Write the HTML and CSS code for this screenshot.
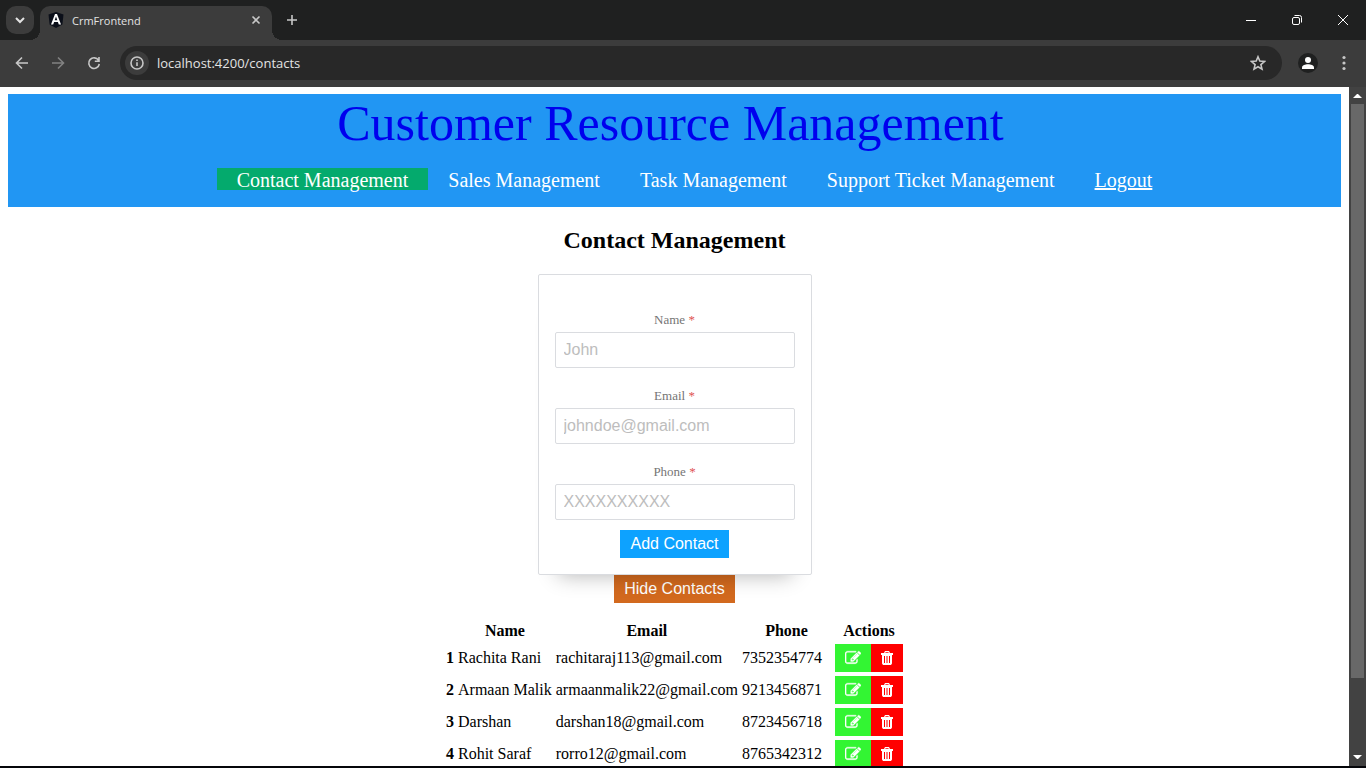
FILE: index.html
```html
<!DOCTYPE html>
<html lang="en">
<head>
<meta charset="utf-8">
<title>CrmFrontend</title>
<link rel="stylesheet" href="styles.css">
</head>
<body>
<svg class="defs" aria-hidden="true">
  <symbol id="edit" viewBox="0 0 1792 1792"><path d="M888 1184l116-116-152-152-116 116v56h96v96h56zm440-720q-16-16-33 1l-350 350q-17 17-1 33t33-1l350-350q17-17 1-33zm80 594v190q0 119-84.5 203.5t-203.5 84.5h-832q-119 0-203.5-84.5t-84.5-203.5v-832q0-119 84.5-203.5t203.5-84.5h832q63 0 117 25 15 7 18 23 3 17-9 29l-49 49q-14 14-32 8-23-6-45-6h-832q-66 0-113 47t-47 113v832q0 66 47 113t113 47h832q66 0 113-47t47-113v-126q0-13 9-22l64-64q15-15 35-7t20 29zm-96-738l288 288-672 672h-288v-288zm444 132l-92 92-288-288 92-92q28-28 68-28t68 28l152 152q28 28 28 68t-28 68z"/></symbol>
  <symbol id="trash" viewBox="0 0 12 14"><path fill-rule="evenodd" d="M4 0h4l1 2h3v2h-1v8.500L10 14H2l-1-1.500V4H0V2h3zM4.600 1.200L4.300 2h3.400l-.3-.8zM3 5v7h1V5zM5.500 5v7h1V5zM8 5v7h1V5z"/></symbol>
</svg>

<div class="tab-strip">
  <button class="tab-search" aria-label="Search tabs"><svg width="28" height="28" viewBox="0 0 28 28"><path class="line thick" d="M10 12l4 4 4-4"/></svg></button>
  <div class="tab">
    <svg width="16" height="16" viewBox="0 0 16 16"><path fill="#0b0f19" d="M8 0l7.500 2.500-1.100 10L8 16l-6.400-3.500L.5 2.500z"/><path fill="#fff" fill-rule="evenodd" d="M7 2h2l4 10.500h-2.200l-.9-2.500H6.100l-.9 2.500H3zM8 4.600L6.700 8.300h2.600z"/></svg>
    <span class="tab-title">CrmFrontend</span>
    <button class="plain" aria-label="Close tab"><svg width="16" height="16" viewBox="0 0 16 16"><path class="line" d="M4.500 4.500l7 7M11.500 4.500l-7 7"/></svg></button>
  </div>
  <button class="plain new-tab" aria-label="New tab"><svg width="16" height="16" viewBox="0 0 16 16"><path class="line" d="M8 3v10M3 8h10"/></svg></button>
  <div class="window-controls">
    <button class="plain" aria-label="Minimize"><svg width="46" height="40" viewBox="0 0 46 40"><path class="hair" d="M18 20.500h10"/></svg></button>
    <button class="plain" aria-label="Restore"><svg width="46" height="40" viewBox="0 0 46 40"><rect class="hair" x="18.500" y="17.500" width="7" height="7" rx="1.500"/><path class="hair" d="M20.500 15.500h5a2 2 0 0 1 2 2v5"/></svg></button>
    <button class="plain" aria-label="Close"><svg width="46" height="40" viewBox="0 0 46 40"><path class="hair" d="M18 15l10 10M28 15l-10 10"/></svg></button>
  </div>
</div>

<div class="toolbar">
  <button class="plain tool" aria-label="Back"><svg width="16" height="16" viewBox="0 0 16 16"><path class="line" d="M14 8H3M8 2.500L2.500 8 8 13.500"/></svg></button>
  <button class="plain tool disabled" aria-label="Forward" disabled><svg width="16" height="16" viewBox="0 0 16 16"><path class="line" d="M2 8h11M8 2.500L13.500 8 8 13.500"/></svg></button>
  <button class="plain tool" aria-label="Reload"><svg width="16" height="16" viewBox="0 0 16 16"><path class="line" d="M12.500 5.200A5.300 5.300 0 1 0 13.300 9M13 2v4.200H8.800"/></svg></button>
  <div class="address">
    <button class="site-info" aria-label="Site information"><svg width="16" height="16" viewBox="0 0 16 16"><circle class="line" cx="8" cy="8" r="6"/><path class="line" d="M8 7.300v3.700M8 4.500v1.400"/></svg></button>
    <input class="url" type="text" aria-label="Address" value="localhost:4200/contacts">
    <button class="plain" aria-label="Bookmark"><svg width="16" height="16" viewBox="0 0 16 16"><path class="line" d="M8 1.800l1.800 4.300 4.700.4-3.600 3.100 1.100 4.500L8 11.700l-4 2.400 1.100-4.500L1.500 6.500l4.700-.4z"/></svg></button>
  </div>
  <button class="plain profile" aria-label="Profile"><svg width="20" height="20" viewBox="0 0 20 20"><circle cx="10" cy="10" r="10" fill="#1f2020"/><circle cx="10" cy="7" r="3" fill="#fff"/><path fill="#fff" d="M4 16v-1.500c0-2.200 3.300-3.300 6-3.300s6 1.100 6 3.300V16z"/></svg></button>
  <button class="plain menu" aria-label="Menu"><svg width="16" height="16" viewBox="0 0 16 16"><g fill="#c7c7c7"><circle cx="8" cy="2.500" r="1.600"/><circle cx="8" cy="8" r="1.600"/><circle cx="8" cy="13.500" r="1.600"/></g></svg></button>
</div>

<div class="viewport">
  <div class="page">
    <header class="banner">
      <a class="brand" href="#">Customer Resource Management</a>
      <nav>
        <ul class="nav-list">
          <li><a class="nav-link active" href="#">Contact Management</a></li>
          <li><a class="nav-link" href="#">Sales Management</a></li>
          <li><a class="nav-link" href="#">Task Management</a></li>
          <li><a class="nav-link" href="#">Support Ticket Management</a></li>
          <li><a class="nav-link logout" href="#">Logout</a></li>
        </ul>
      </nav>
    </header>
    <main class="content">
      <h2 class="title">Contact Management</h2>
      <form class="card">
        <div class="field">
          <label for="name">Name <span class="required">*</span></label>
          <input id="name" type="text" placeholder="John">
        </div>
        <div class="field">
          <label for="email">Email <span class="required">*</span></label>
          <input id="email" type="email" placeholder="johndoe@gmail.com">
        </div>
        <div class="field">
          <label for="phone">Phone <span class="required">*</span></label>
          <input id="phone" type="tel" placeholder="XXXXXXXXXX">
        </div>
        <button class="btn add" type="submit">Add Contact</button>
      </form>
      <button class="btn hide" type="button">Hide Contacts</button>
      <table class="contacts">
        <thead>
          <tr><th></th><th>Name</th><th>Email</th><th class="phone">Phone</th><th>Actions</th></tr>
        </thead>
        <tbody>
          <tr><th>1</th><td>Rachita Rani</td><td>rachitaraj113@gmail.com</td><td>7352354774</td><td><div class="actions"><button class="btn edit" aria-label="Edit"><svg width="16" height="16"><use href="#edit"/></svg></button><button class="btn delete" aria-label="Delete"><svg width="12" height="14"><use href="#trash"/></svg></button></div></td></tr>
          <tr><th>2</th><td>Armaan Malik</td><td>armaanmalik22@gmail.com</td><td>9213456871</td><td><div class="actions"><button class="btn edit" aria-label="Edit"><svg width="16" height="16"><use href="#edit"/></svg></button><button class="btn delete" aria-label="Delete"><svg width="12" height="14"><use href="#trash"/></svg></button></div></td></tr>
          <tr><th>3</th><td>Darshan</td><td>darshan18@gmail.com</td><td>8723456718</td><td><div class="actions"><button class="btn edit" aria-label="Edit"><svg width="16" height="16"><use href="#edit"/></svg></button><button class="btn delete" aria-label="Delete"><svg width="12" height="14"><use href="#trash"/></svg></button></div></td></tr>
          <tr><th>4</th><td>Rohit Saraf</td><td>rorro12@gmail.com</td><td>8765342312</td><td><div class="actions"><button class="btn edit" aria-label="Edit"><svg width="16" height="16"><use href="#edit"/></svg></button><button class="btn delete" aria-label="Delete"><svg width="12" height="14"><use href="#trash"/></svg></button></div></td></tr>
        </tbody>
      </table>
    </main>
  </div>
  <div class="scrollbar" aria-hidden="true">
    <svg width="17" height="17" viewBox="0 0 17 17"><path fill="#fff" d="M4 11l4-4h1l4 4z"/></svg>
    <div class="track"><div class="thumb"></div></div>
    <svg width="17" height="17" viewBox="0 0 17 17"><path fill="#fff" d="M4 6l4 4h1l4-4z"/></svg>
  </div>
</div>
</body>
</html>
```
FILE: styles.css
```css
* { box-sizing: border-box; }

body {
  margin: 0;
  height: 100vh;
  display: flex;
  flex-direction: column;
  overflow: hidden;
  background: #3c3c3c;
  border-bottom: 2px solid #05060a;
  font-family: "Liberation Serif", "Times New Roman", serif;
  font-size: 16px;
  color: #000;
}

button { border: 0; margin: 0; cursor: pointer; }
svg { display: block; }
.defs { position: absolute; width: 0; height: 0; }

.line { fill: none; stroke: #c7c7c7; stroke-width: 1.6; }
.thick { stroke: #e3e3e3; stroke-width: 2; }
.hair { fill: none; stroke: #fff; stroke-width: 1; }
.plain { padding: 0; background: none; }

/* Browser frame */
.tab-strip {
  display: flex;
  align-items: center;
  height: 40px;
  padding-left: 6px;
  background: #1f2020;
  font-family: "Open Sans", "Noto Sans", sans-serif;
}
.tab-search {
  width: 28px;
  height: 28px;
  padding: 0;
  border-radius: 10px;
  background: #3c3c3c;
}
.tab {
  position: relative;
  display: flex;
  align-items: center;
  align-self: flex-end;
  gap: 8px;
  width: 232px;
  height: 34px;
  margin-left: 6px;
  padding: 0 8px 6px;
  border-radius: 10px 10px 0 0;
  background: #3c3c3c;
}
.tab::before,
.tab::after {
  content: "";
  position: absolute;
  bottom: 0;
  width: 10px;
  height: 10px;
}
.tab::before { right: 100%; background: radial-gradient(circle at 0 0, transparent 10px, #3c3c3c 10px); }
.tab::after { left: 100%; background: radial-gradient(circle at 100% 0, transparent 10px, #3c3c3c 10px); }
.tab-title { flex: 1; font-size: 11px; color: #e3e3e3; }
.new-tab { margin-left: 12px; }
.window-controls { display: flex; margin-left: auto; }

.toolbar {
  display: flex;
  align-items: center;
  height: 47px;
  padding: 0 14px 1px;
  background: #3c3c3c;
}
.tool { margin-right: 20px; }
.disabled { opacity: 0.5; }
.address {
  flex: 1;
  display: flex;
  align-items: center;
  height: 34px;
  margin-left: -2px;
  padding: 0 16px 0 5px;
  border-radius: 17px;
  background: #282828;
}
.site-info {
  width: 24px;
  height: 24px;
  padding: 4px;
  border-radius: 12px;
  background: #3c3c3c;
}
.url {
  flex: 1;
  margin-left: 8px;
  padding: 0;
  border: 0;
  outline: 0;
  background: none;
  color: #e3e3e3;
  font-family: "Open Sans", "Noto Sans", sans-serif;
  font-size: 13px;
}
.profile { margin-left: 16px; }
.menu { margin-left: 18px; }

/* Page */
.viewport { flex: 1; display: flex; min-height: 0; background: #fff; }
.page { flex: 1; padding: 7px 8px 0; overflow: hidden; }
.scrollbar {
  display: flex;
  flex-direction: column;
  width: 17px;
  background: #424242;
}
.track { flex: 1; padding: 0 2px; }
.thumb { height: 89%; background: #686868; }

.banner {
  padding: 1px 0 17px;
  background: #2196f3;
  text-align: center;
}
.brand {
  display: block;
  padding-right: 8px;
  font-size: 50px;
  line-height: 56px;
  color: #0000ee;
  text-decoration: none;
}
.nav-list {
  display: flex;
  justify-content: center;
  margin: 17px 0 0;
  padding: 0 0 0 40px;
  list-style: none;
}
.nav-link {
  display: block;
  padding: 2px 20px 0;
  font-size: 20px;
  line-height: 20px;
  color: #fff;
  text-decoration: none;
}
.active { background: #04aa6d; }
.logout { text-decoration: underline; }

.content { display: flex; flex-direction: column; align-items: center; }
.title { margin: 20px 0; font-size: 24px; line-height: 27px; }

.card {
  position: relative;
  display: flex;
  flex-direction: column;
  align-items: center;
  padding: 37px 16px 16px;
  border: 1px solid #dadce0;
  border-radius: 2px;
  box-shadow: 0 20px 20px -20px rgba(0, 0, 0, 0.3);
}
.field { width: 240px; margin-bottom: 20px; text-align: center; }
.field:nth-of-type(3) { margin-bottom: 10px; }
.field label {
  display: block;
  height: 20px;
  font-size: 13px;
  line-height: 16px;
  color: #757575;
}
.required { color: #e05252; }
.field input {
  display: block;
  width: 100%;
  height: 36px;
  padding: 0 8px;
  border: 1px solid #dadce0;
  border-radius: 2px;
  font-family: "Liberation Sans", Arial, sans-serif;
  font-size: 16px;
}
.field input::placeholder { color: #bdbdbd; }

.btn {
  height: 28px;
  padding: 0 10px;
  font-family: "Liberation Sans", Arial, sans-serif;
  font-size: 16px;
  color: #fff;
}
.add { background: #0da2ff; }
.hide { background: #d2691e; }
.edit { background: #33f533; }
.delete { background: #f00; }
.btn svg { fill: #fff; }
.edit svg { stroke: #fff; stroke-width: 40; }

.contacts { margin-top: 16px; border-spacing: 2px; }
.contacts th,
.contacts td { padding: 1px; line-height: 18px; }
.contacts .phone { width: 91px; }
.actions { display: flex; }
```
